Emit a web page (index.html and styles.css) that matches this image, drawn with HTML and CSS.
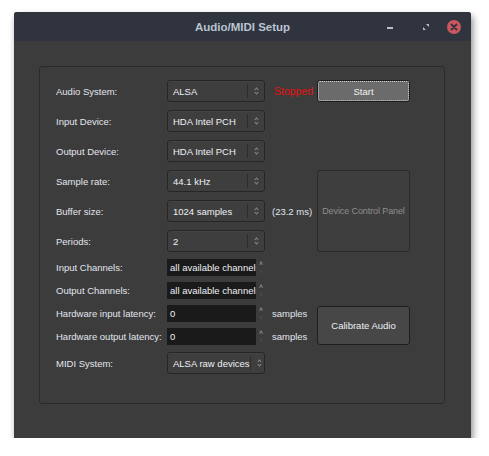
FILE: index.html
```html
<!DOCTYPE html>
<html>
<head>
<meta charset="utf-8">
<link rel="stylesheet" href="styles.css">
</head>
<body>
<div class="window">
  <div class="titlebar">
    <div class="title">Audio/MIDI Setup</div>
    <div class="wbtns">
      <span class="wb"><svg width="8" height="8" viewBox="0 0 8 8"><rect x="1" y="4" width="6" height="2" fill="#b8bfca"/></svg></span>
      <span class="wb"><svg width="8" height="8" viewBox="0 0 8 8"><path d="M4 1h3v3z M1 4v3h3z" fill="#b8bfca"/></svg></span>
      <span class="wb close"><svg width="14" height="14" viewBox="0 0 14 14"><circle cx="7" cy="7" r="7" fill="#cc575d"/><path d="M4.5 4.5l5 5M9.5 4.5l-5 5" stroke="#2f343f" stroke-width="1.8" stroke-linecap="round"/></svg></span>
    </div>
  </div>
  <div class="body">
    <div class="frame">
      <div class="grid">
        <div class="lbl r1">Audio System:</div>
        <div class="combo r1"><span>ALSA</span><i class="arr"></i></div>
        <div class="status r1">Stopped</div>
        <button class="btn start r1">Start</button>

        <div class="lbl r2">Input Device:</div>
        <div class="combo r2"><span>HDA Intel PCH</span><i class="arr"></i></div>

        <div class="lbl r3">Output Device:</div>
        <div class="combo r3"><span>HDA Intel PCH</span><i class="arr"></i></div>

        <div class="lbl r4">Sample rate:</div>
        <div class="combo r4"><span>44.1 kHz</span><i class="arr"></i></div>
        <button class="btn dcp">Device Control Panel</button>

        <div class="lbl r5">Buffer size:</div>
        <div class="combo r5"><span>1024 samples</span><i class="arr"></i></div>
        <div class="note r5">(23.2 ms)</div>

        <div class="lbl r6">Periods:</div>
        <div class="combo r6"><span>2</span><i class="arr"></i></div>

        <div class="lbl r7">Input Channels:</div>
        <div class="spin r7"><div class="field">all available channels</div><div class="sarr"><b>&#708;</b><b class="dim">&#709;</b></div></div>

        <div class="lbl r8">Output Channels:</div>
        <div class="spin r8"><div class="field">all available channels</div><div class="sarr"><b>&#708;</b><b class="dim">&#709;</b></div></div>

        <div class="lbl r9">Hardware input latency:</div>
        <div class="spin r9"><div class="field">0</div><div class="sarr"><b>&#708;</b><b class="dim">&#709;</b></div></div>
        <div class="note r9">samples</div>
        <button class="btn cal">Calibrate Audio</button>

        <div class="lbl r10">Hardware output latency:</div>
        <div class="spin r10"><div class="field">0</div><div class="sarr"><b>&#708;</b><b class="dim">&#709;</b></div></div>
        <div class="note r10">samples</div>

        <div class="lbl r11">MIDI System:</div>
        <div class="combo r11"><span>ALSA raw devices</span><i class="arr"></i></div>
      </div>
    </div>
  </div>
</div>
</body>
</html>
```

FILE: styles.css
```css
html, body {
  margin: 0;
  padding: 0;
  background: #ffffff;
}
body {
  font-family: "Liberation Sans", Arial, sans-serif;
  font-size: 9.5px;
}
.window {
  margin: 12px 0 0 14px;
  width: 457px;
  height: 426px;
  background: #3c3c3c;
  border-radius: 3px 3px 0 0;
  box-shadow: 2px 4px 7px rgba(0,0,0,0.45);
  display: flex;
  flex-direction: column;
  overflow: hidden;
}
.titlebar {
  height: 29px;
  background: #2f343f;
  position: relative;
  display: flex;
  align-items: center;
  justify-content: center;
}
.title {
  color: #bac3d0;
  font-weight: bold;
  font-size: 11.5px;
}
.wbtns {
  position: absolute;
  right: 10px;
  top: 0;
  height: 29px;
  display: flex;
  align-items: center;
}
.wb {
  width: 36px;
  display: flex;
  justify-content: center;
  align-items: center;
}
.wb.close { width: 14px; margin-left: 3px; }
.body {
  flex: 1;
  padding: 25px 25px 0 25px;
}
.frame {
  width: 388px;
  height: 327px;
  border: 1px solid #2a2a2a;
  border-radius: 3px;
  padding: 9px 0 0 16px;
}
.grid {
  display: grid;
  grid-template-columns: 111px 98px 52px 93px;
  grid-template-rows: 30px 30px 30px 30px 30px 30px 23px 23px 23px 23px 30px;
  align-items: center;
  color: #e2e6ee;
}
.r1 { grid-row: 1; } .r2 { grid-row: 2; } .r3 { grid-row: 3; }
.r4 { grid-row: 4; } .r5 { grid-row: 5; } .r6 { grid-row: 6; }
.r7 { grid-row: 7; } .r8 { grid-row: 8; } .r9 { grid-row: 9; }
.r10 { grid-row: 10; } .r11 { grid-row: 11; }
.lbl { grid-column: 1; white-space: nowrap; }
.combo {
  grid-column: 2;
  height: 22px;
  box-sizing: border-box;
  border: 1px solid #262626;
  border-radius: 3px;
  background: #3e3e3e;
  box-shadow: inset 0 1px 0 rgba(255,255,255,0.03);
  display: flex;
  align-items: center;
  padding-left: 5px;
  color: #eef0f4;
}
.combo span { flex: 1; white-space: nowrap; }
.arr {
  width: 16px;
  height: 14px;
  border-left: 1px solid #2c2c2c;
  position: relative;
}
.arr::before, .arr::after {
  content: "";
  position: absolute;
  left: 7px;
  width: 2px;
  height: 2px;
  border-left: 1px solid #8a8a8a;
  border-top: 1px solid #8a8a8a;
}
.arr::before { top: 4px; transform: rotate(45deg); }
.arr::after { top: 7px; transform: rotate(225deg); }
.status {
  grid-column: 3;
  color: #e81010;
  padding-left: 9px;
  font-size: 10.5px;
}
.note {
  grid-column: 3;
  padding-left: 7px;
  white-space: nowrap;
}
.btn {
  font-family: inherit;
  font-size: inherit;
  grid-column: 4;
  box-sizing: border-box;
  border-radius: 3px;
  margin: 0;
  padding: 0;
}
.start {
  height: 22px;
  background: #6a6b6a;
  border: 1px solid #1c1c1c;
  outline: 1px dotted #d8d8d8;
  outline-offset: -2px;
  color: #f2f2f2;
}
.dcp {
  grid-row: 4 / span 3;
  height: 82px;
  background: #3e3e3e;
  border: 1px solid #2a2a2a;
  color: #8d8d8d;
  font-size: 9px;
  letter-spacing: -0.1px;
}
.cal {
  grid-row: 9 / span 2;
  height: 39px;
  background: #474747;
  border: 1px solid #1e1e1e;
  color: #eef0f4;
}
.spin {
  grid-column: 2;
  display: flex;
  align-items: center;
  height: 17px;
}
.field {
  width: 90px;
  height: 17px;
  background: #1a1a1a;
  box-sizing: border-box;
  padding-left: 3px;
  line-height: 17px;
  white-space: nowrap;
  overflow: hidden;
  color: #eef0f4;
}
.sarr {
  display: flex;
  flex-direction: column;
  width: 8px;
  margin-left: 1px;
  font-size: 7px;
  line-height: 7px;
  color: #aaaaaa;
}
.sarr b { font-weight: normal; height: 8px; text-align: center; }
.sarr .dim { color: #555555; }
```
